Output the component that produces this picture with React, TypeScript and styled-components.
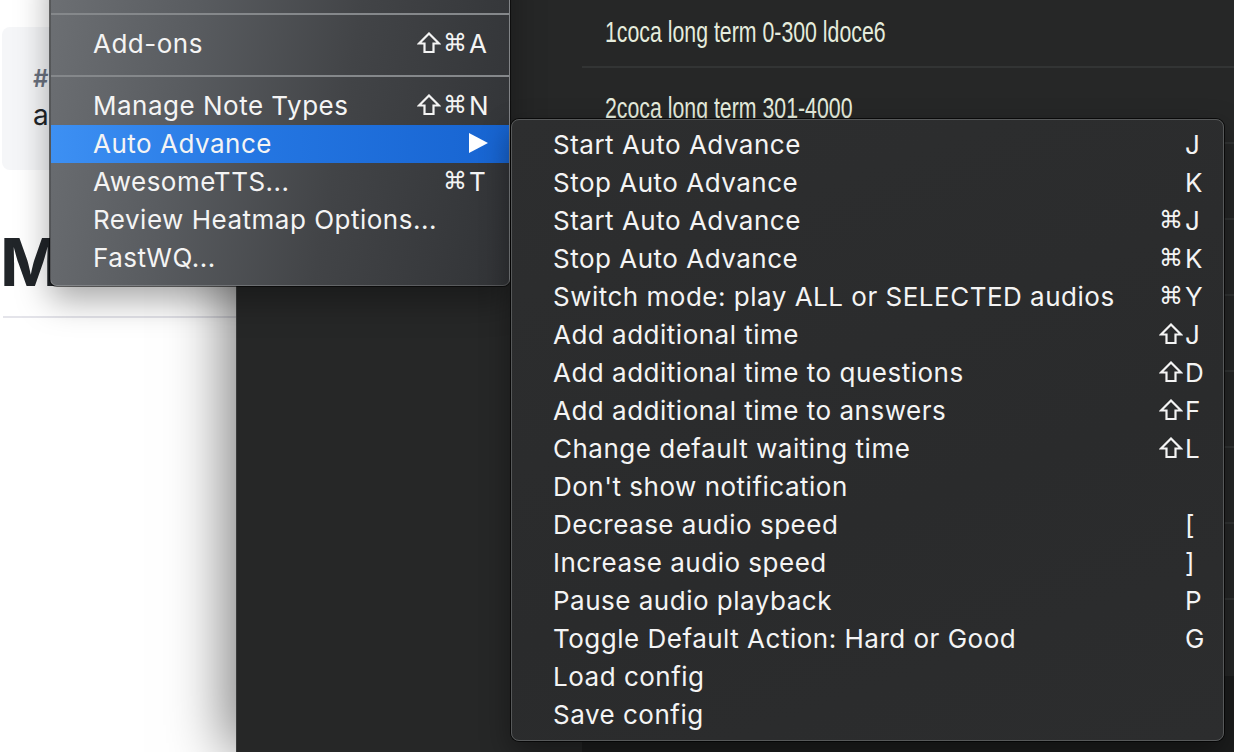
import React from 'react';
import styled, { createGlobalStyle } from 'styled-components';

const GlobalStyle = createGlobalStyle`
    html, body {
        margin: 0;
        padding: 0;
        width: 1234px;
        height: 752px;
        overflow: hidden;
        background: #262727;
    }
    * { box-sizing: border-box; }
`;

const Screen = styled.div`
    position: relative;
    display: flex;
    width: 1234px;
    height: 752px;
    overflow: hidden;
    font-family: "Inter", "DejaVu Sans", sans-serif;
`;

// white page on the left
const PagePane = styled.div`
    width: 236px;
    flex-shrink: 0;
    background: #ffffff;
    padding-top: 27px;
`;

const InfoCard = styled.div`
    margin-left: 2px;
    width: 260px;
    height: 143px;
    background: #f5f6f8;
    border-radius: 8px;
    padding: 34px 0 0 31px;
`;

const Hash = styled.div`
    font-size: 24px;
    line-height: 36px;
    color: #6b7280;
    font-weight: 600;
`;

const Plain = styled.div`
    font-size: 28px;
    line-height: 36px;
    color: #212529;
`;

const Heading = styled.div`
    margin: 52px 0 0 0;
    font-size: 66px;
    font-weight: 700;
    line-height: 80px;
    color: #212529;
`;

const Rule = styled.hr`
    margin: 14px 0 0 3px;
    border: none;
    height: 2px;
    background: #e4e4ea;
`;

// dark deck browser behind the menus
const DarkPane = styled.div`
    position: relative;
    z-index: 1;
    flex: 1;
    display: flex;
    background: #262727;
    box-shadow: -10px 0 55px rgba(0, 0, 0, 0.5);
`;

const Sidebar = styled.div`
    width: 346px;
    flex-shrink: 0;
    border-left: 1px solid #3a3b3b;
`;

const ListColumn = styled.div`
    flex: 1;
    display: flex;
    flex-direction: column;
    background: #1c1d1d;
`;

const DeckList = styled.div`
    margin-top: -8px;
    background: #262727;
`;

const DeckRow = styled.div`
    height: 76px;
    display: flex;
    align-items: center;
    padding: 6px 0 0 23px;
    border-bottom: 2px solid #323434;
    &:last-child { border-bottom: none; }
`;

const DeckName = styled.span`
    font-family: "Liberation Sans", Arial, sans-serif;
    font-size: 30px;
    color: #e5ecdd;
    white-space: nowrap;
    transform: scaleX(0.71);
    transform-origin: left center;
`;

// menus
const MainMenu = styled.div`
    position: absolute;
    z-index: 5;
    left: 50px;
    top: -44px;
    width: 460px;
    padding: 6px 0 8px;
    border-radius: 0 0 7px 7px;
    background: linear-gradient(100deg, #6d7074 0%, #595c60 30%, #424447 62%, #313336 100%);
    border: 1px solid rgba(255, 255, 255, 0.16);
    box-shadow: 0 0 0 1px rgba(0, 0, 0, 0.55), 0 14px 34px rgba(0, 0, 0, 0.35);
`;

const SubMenu = styled.div`
    position: absolute;
    z-index: 6;
    left: 511px;
    top: 119px;
    width: 713px;
    height: 622px;
    padding: 6px 0 8px;
    border-radius: 8px;
    background: linear-gradient(160deg, #2d2e2f 0%, #2a2b2c 60%, #2c2d2e 100%);
    border: 1px solid #57595a;
    box-shadow: 0 0 0 1px rgba(0, 0, 0, 0.7), 0 12px 30px rgba(0, 0, 0, 0.4);
`;

const Item = styled.div<{ $active?: boolean; $pad: number }>`
    height: 38px;
    display: flex;
    align-items: center;
    justify-content: space-between;
    padding: 0 ${p => p.$pad}px 2px ${p => (p.$pad === 18 ? 42 : 41)}px;
    font-size: 26px;
    letter-spacing: 0.5px;
    color: #f4f4f4;
    white-space: nowrap;
    background: ${p => (p.$active ? 'linear-gradient(90deg, #3d90f3 0%, #2476e2 45%, #1764d1 100%)' : 'transparent')};
`;

const Separator = styled.div`
    height: 2px;
    margin: 12px 0 10px;
    background: #85888b;
`;

const Shortcut = styled.span`
    display: flex;
    align-items: center;
    gap: 2px;
`;

const Cmd = styled.span`
    font-family: "DejaVu Sans", sans-serif;
    font-size: 24px;
    letter-spacing: 0;
    line-height: 1;
`;

const Key = styled.span<{ $w: number }>`
    width: ${p => p.$w}px;
    text-align: left;
    letter-spacing: 0;
`;

const ShiftIcon = () => (
    <svg width="24" height="22" viewBox="0 0 24 22">
        <path d="M12 1.5 L22 11.5 L16.5 11.5 L16.5 20 L7.5 20 L7.5 11.5 L2 11.5 Z" fill="none" stroke="#f4f4f4" strokeWidth="2.2" strokeLinejoin="miter" />
    </svg>
);

const Arrow = () => (
    <svg width="20" height="20" viewBox="0 0 20 20" style={{ marginRight: 3 }}>
        <polygon points="1,0 20,10 1,20" fill="#ffffff" />
    </svg>
);

type Entry = { label: string; mods?: string; key?: string };

const subItems: Entry[] = [
    { label: 'Start Auto Advance', key: 'J' },
    { label: 'Stop Auto Advance', key: 'K' },
    { label: 'Start Auto Advance', mods: 'c', key: 'J' },
    { label: 'Stop Auto Advance', mods: 'c', key: 'K' },
    { label: 'Switch mode: play ALL or SELECTED audios', mods: 'c', key: 'Y' },
    { label: 'Add additional time', mods: 's', key: 'J' },
    { label: 'Add additional time to questions', mods: 's', key: 'D' },
    { label: 'Add additional time to answers', mods: 's', key: 'F' },
    { label: 'Change default waiting time', mods: 's', key: 'L' },
    { label: "Don't show notification" },
    { label: 'Decrease audio speed', key: '[' },
    { label: 'Increase audio speed', key: ']' },
    { label: 'Pause audio playback', key: 'P' },
    { label: 'Toggle Default Action: Hard or Good', key: 'G' },
    { label: 'Load config' },
    { label: 'Save config' },
];

const decks = [
    '1coca long term 0-300 ldoce6',
    '2coca long term 301-4000',
    '', '', '', '', '', '', '',
];

// mods: s = shift, c = command
const renderShortcut = (e: Entry, w: number) =>
    e.key ? (
        <Shortcut>
            {e.mods?.split('').map((m, i) =>
                m === 's' ? <ShiftIcon key={i} /> : <Cmd key={i}>⌘</Cmd>
            )}
            <Key $w={w}>{e.key}</Key>
        </Shortcut>
    ) : null;

const App = () => {
    return (
        <Screen>
            <GlobalStyle />
            <PagePane>
                <InfoCard>
                    <Hash>#</Hash>
                    <Plain>a</Plain>
                </InfoCard>
                <Heading>M</Heading>
                <Rule />
            </PagePane>
            <DarkPane>
                <Sidebar />
                <ListColumn>
                    <DeckList>
                        {decks.map((d, i) => (
                            <DeckRow key={i}>
                                <DeckName>{d}</DeckName>
                            </DeckRow>
                        ))}
                    </DeckList>
                </ListColumn>
            </DarkPane>

            <MainMenu>
                <Item $pad={18} />
                <Separator />
                <Item $pad={18}>
                    Add-ons
                    {renderShortcut({ label: '', mods: 'sc', key: 'A' }, 22)}
                </Item>
                <Separator />
                <Item $pad={18}>
                    Manage Note Types
                    {renderShortcut({ label: '', mods: 'sc', key: 'N' }, 22)}
                </Item>
                <Item $pad={18} $active>
                    Auto Advance
                    <Arrow />
                </Item>
                <Item $pad={18}>
                    AwesomeTTS...
                    {renderShortcut({ label: '', mods: 'c', key: 'T' }, 22)}
                </Item>
                <Item $pad={18}>Review Heatmap Options...</Item>
                <Item $pad={18}>FastWQ...</Item>
            </MainMenu>

            <SubMenu>
                {subItems.map((e, i) => (
                    <Item key={i} $pad={17}>
                        {e.label}
                        {renderShortcut(e, 21)}
                    </Item>
                ))}
            </SubMenu>
        </Screen>
    );
};

export default App;
